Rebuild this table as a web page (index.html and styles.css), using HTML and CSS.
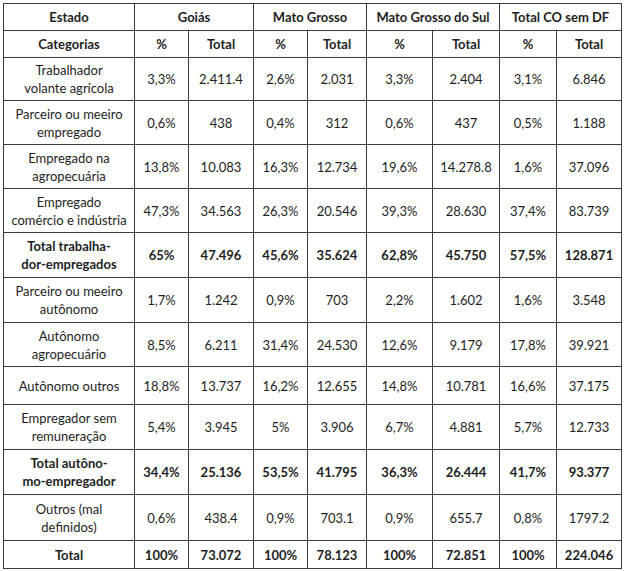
FILE: index.html
```html
<!DOCTYPE html>
<html lang="pt">
<head>
<meta charset="utf-8">
<link rel="stylesheet" href="styles.css">
</head>
<body>
<table class="data">
  <colgroup>
    <col class="c-cat"><col class="c-p"><col class="c-t1">
    <col class="c-p"><col class="c-t2"><col class="c-p2"><col class="c-t3">
    <col class="c-p3"><col class="c-t4">
  </colgroup>
  <tr class="h27 head">
    <th>Estado</th><th colspan="2">Goiás</th><th colspan="2">Mato Grosso</th><th colspan="2">Mato Grosso do Sul</th><th colspan="2">Total CO sem DF</th>
  </tr>
  <tr class="h27 head">
    <th>Categorias</th><th>%</th><th>Total</th><th>%</th><th>Total</th><th>%</th><th>Total</th><th>%</th><th>Total</th>
  </tr>
  <tr class="h43"><td>Trabalhador<br>volante agrícola</td><td>3,3%</td><td>2.411.4</td><td>2,6%</td><td>2.031</td><td>3,3%</td><td>2.404</td><td>3,1%</td><td>6.846</td></tr>
  <tr class="h44"><td>Parceiro ou meeiro<br>empregado</td><td>0,6%</td><td>438</td><td>0,4%</td><td>312</td><td>0,6%</td><td>437</td><td>0,5%</td><td>1.188</td></tr>
  <tr class="h44"><td>Empregado na<br>agropecuária</td><td>13,8%</td><td>10.083</td><td>16,3%</td><td>12.734</td><td>19,6%</td><td>14.278.8</td><td>1,6%</td><td>37.096</td></tr>
  <tr class="h44"><td>Empregado<br>comércio e indústria</td><td>47,3%</td><td>34.563</td><td>26,3%</td><td>20.546</td><td>39,3%</td><td>28.630</td><td>37,4%</td><td>83.739</td></tr>
  <tr class="h45 bold"><td>Total trabalha-<br>dor-empregados</td><td>65%</td><td>47.496</td><td>45,6%</td><td>35.624</td><td>62,8%</td><td>45.750</td><td>57,5%</td><td>128.871</td></tr>
  <tr class="h45"><td>Parceiro ou meeiro<br>autônomo</td><td>1,7%</td><td>1.242</td><td>0,9%</td><td>703</td><td>2,2%</td><td>1.602</td><td>1,6%</td><td>3.548</td></tr>
  <tr class="h44"><td>Autônomo<br>agropecuário</td><td>8,5%</td><td>6.211</td><td>31,4%</td><td>24.530</td><td>12,6%</td><td>9.179</td><td>17,8%</td><td>39.921</td></tr>
  <tr class="h38"><td>Autônomo outros</td><td>18,8%</td><td>13.737</td><td>16,2%</td><td>12.655</td><td>14,8%</td><td>10.781</td><td>16,6%</td><td>37.175</td></tr>
  <tr class="h45"><td>Empregador sem<br>remuneração</td><td>5,4%</td><td>3.945</td><td>5%</td><td>3.906</td><td>6,7%</td><td>4.881</td><td>5,7%</td><td>12.733</td></tr>
  <tr class="h45 bold"><td>Total autôno-<br>mo-empregador</td><td>34,4%</td><td>25.136</td><td>53,5%</td><td>41.795</td><td>36,3%</td><td>26.444</td><td>41,7%</td><td>93.377</td></tr>
  <tr class="h46"><td>Outros (mal<br>definidos)</td><td>0,6%</td><td>438.4</td><td>0,9%</td><td>703.1</td><td>0,9%</td><td>655.7</td><td>0,8%</td><td>1797.2</td></tr>
  <tr class="h28 bold"><td>Total</td><td>100%</td><td>73.072</td><td>100%</td><td>78.123</td><td>100%</td><td>72.851</td><td>100%</td><td>224.046</td></tr>
</table>
</body>
</html>
```

FILE: styles.css
```css
html, body {
  margin: 0;
  background: #ffffff;
}
body {
  padding: 3px 0 0 3px;
  font-family: Lato, "Open Sans", "DejaVu Sans", sans-serif;
  font-size: 13px;
  color: #1e1e1e;
}
.data {
  border-collapse: collapse;
  table-layout: fixed;
  width: 619px;
}
.data th, .data td {
  border: 1px solid #3a3a3a;
  padding: 0;
  text-align: center;
  vertical-align: middle;
  line-height: 18px;
}
.data th { font-weight: 700; }
.bold td { font-weight: 700; }
.c-cat { width: 131px; }
.c-p { width: 54px; }
.c-t1 { width: 65px; }
.c-t2 { width: 59px; }
.c-p2 { width: 66px; }
.c-t3 { width: 67px; }
.c-p3 { width: 57px; }
.c-t4 { width: 65px; }
.h27 { height: 27px; }
.h28 { height: 28px; }
.h38 { height: 38px; }
.h43 { height: 43px; }
.h44 { height: 44px; }
.h45 { height: 45px; }
.h46 { height: 46px; }
```
